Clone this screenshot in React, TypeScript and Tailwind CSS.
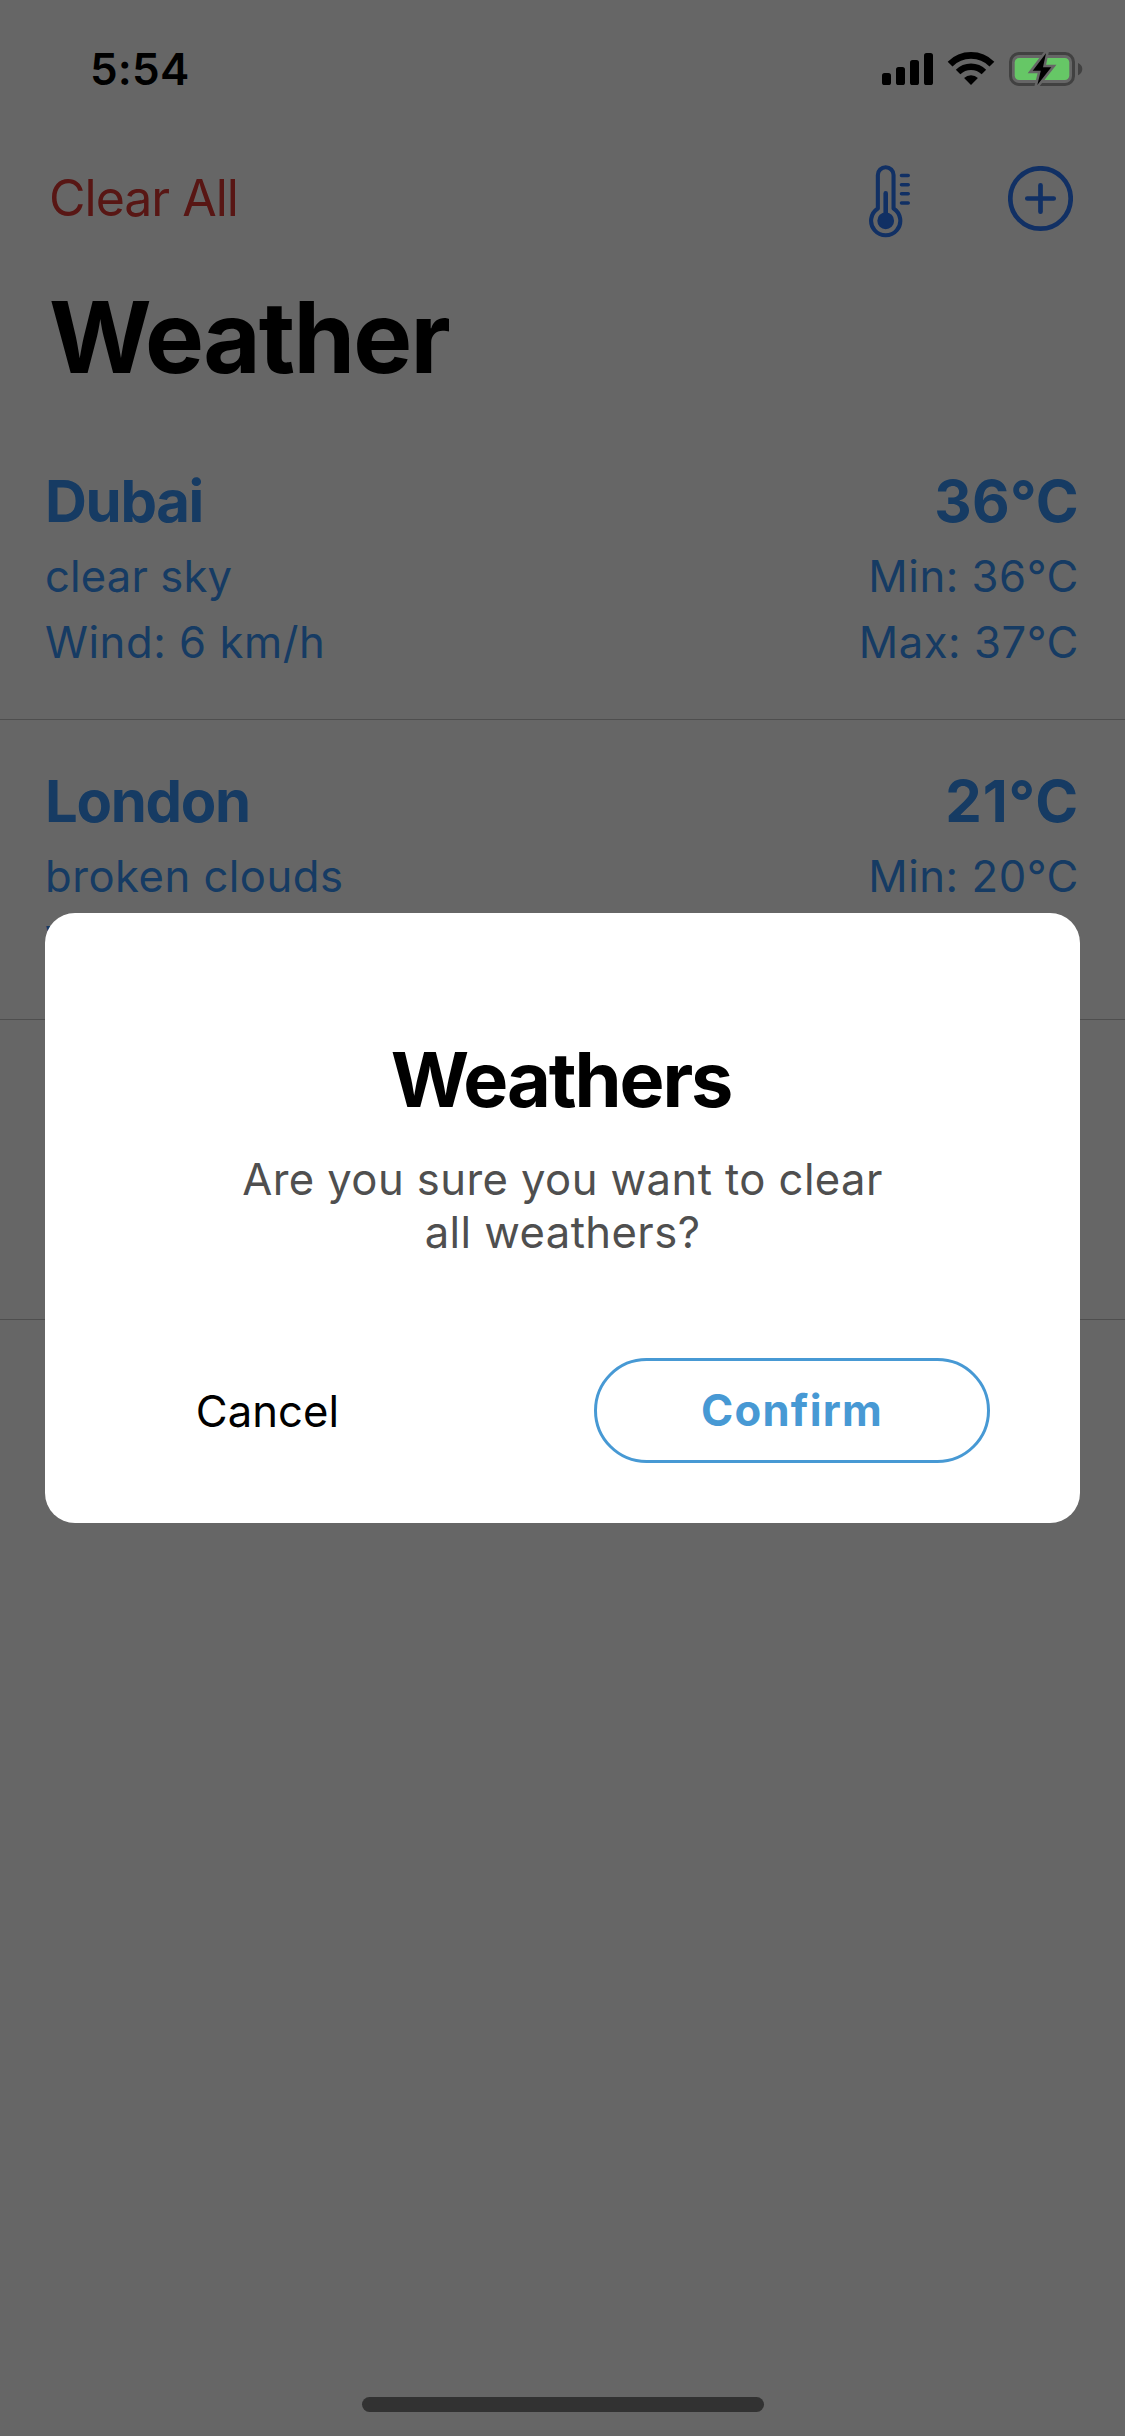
type City = {
  name: string;
  temp: string;
  sky: string;
  wind: string;
  min: string;
  max: string;
  tempTracking: string;
  skyTracking: string;
};

const cities: City[] = [
  {
    name: "Dubai",
    temp: "36°C",
    sky: "clear sky",
    wind: "Wind: 6 km/h",
    min: "Min: 36°C",
    max: "Max: 37°C",
    tempTracking: "tracking-[0.25px]",
    skyTracking: "tracking-[0.15px]",
  },
  {
    name: "London",
    temp: "21°C",
    sky: "broken clouds",
    wind: "Wind: 4 km/h",
    min: "Min: 20°C",
    max: "Max: 22°C",
    tempTracking: "tracking-[0.9px]",
    skyTracking: "tracking-[0.5px]",
  },
];

function StatusIcons() {
  return (
    <svg width="201" height="36" viewBox="22 21 201 36" fill="none">
      <rect x="22" y="43" width="9" height="12" rx="2.6" fill="#000" />
      <rect x="36" y="37" width="9" height="18" rx="2.6" fill="#000" />
      <rect x="50" y="30" width="9" height="25" rx="2.6" fill="#000" />
      <rect x="64" y="23" width="9" height="32" rx="2.6" fill="#000" />

      <path d="M90.1 34.1A29.5 29.5 0 0 1 131.9 34.1" stroke="#000" strokeWidth="6.8" />
      <path d="M98.1 42.1A18.3 18.3 0 0 1 123.9 42.1" stroke="#000" strokeWidth="6.4" />
      <path d="M111 55L104.1 48.1A9.8 9.8 0 0 1 117.9 48.1Z" fill="#000" />

      <rect x="150.5" y="23.5" width="63" height="31" rx="8.5" stroke="#414141" strokeWidth="3" />
      <rect x="154.7" y="28" width="54.6" height="22" rx="4.5" fill="#66c766" />
      <path d="M218 33C220.6 34 222.3 36.4 222.3 39C222.3 41.8 220.6 44.2 218 45.2Z" fill="#414141" />
      <path
        d="M186 23.3L172.7 40.7H180.8L177.3 55L191.3 37.3H183Z"
        stroke="#666"
        strokeWidth="5"
        strokeMiterlimit="6"
      />
      <path d="M186 23.3L172.7 40.7H180.8L177.3 55L191.3 37.3H183Z" fill="#000" />
    </svg>
  );
}

function ThermometerIcon() {
  return (
    <svg className="mt-[6px]" width="41" height="73" viewBox="0 0 41 73" fill="none" stroke="#2b78fa">
      <path d="M8.85 43.4V10.1a7.85 7.85 0 0 1 15.7 0v33.3a14.6 14.6 0 1 1-15.7 0Z" strokeWidth="4.1" strokeLinejoin="round" />
      <path d="M16.7 28.4V55" strokeWidth="4.6" strokeLinecap="round" />
      <circle cx="16.7" cy="55.8" r="8.4" fill="#2b78fa" stroke="none" />
      <path d="M32.5 10.5H39.2M32.5 19.7H39.2M32.5 28.8H39.2M32.5 38H39.2" strokeWidth="3.6" strokeLinecap="round" />
    </svg>
  );
}

function AddIcon() {
  return (
    <svg className="mt-px" width="65" height="66" viewBox="0 0 65 66" fill="none" stroke="#2b78fa" strokeLinecap="round">
      <circle cx="32.5" cy="32.5" r="30.2" strokeWidth="4.7" />
      <path d="M19.3 32.5H45.7M32.5 19.3V45.7" strokeWidth="4.7" />
    </svg>
  );
}

function CityRow({ city }: { city: City }) {
  return (
    <li className="flex h-[300px] justify-between border-b border-[#c3c3c3] pt-[39px] pr-[46px] pl-[45px] text-[43.6px] leading-[66px] tracking-[0.55px] text-[#3794f8]">
      <div>
        <h2 className="mb-px text-[58px] leading-[84px] font-bold tracking-[-1.3px]">{city.name}</h2>
        <p className={city.skyTracking}>{city.sky}</p>
        <p>{city.wind}</p>
      </div>
      <div className="text-right">
        <p className={`mb-px text-[58px] leading-[84px] font-bold ${city.tempTracking}`}>{city.temp}</p>
        <p>{city.min}</p>
        <p>{city.max}</p>
      </div>
    </li>
  );
}

function ConfirmDialog() {
  return (
    <div className="absolute inset-0 flex items-center justify-center bg-black/60">
      <div className="flex h-[610px] w-[1035px] flex-col items-center rounded-[30px] bg-white px-[90px] pt-[121px]">
        <h3 className="mr-[3px] text-[75.6px] leading-[91px] font-bold tracking-[-2.1px] text-black">Weathers</h3>
        <p className="mt-[28px] w-[660px] text-center text-[43.6px] leading-[53px] tracking-[0.42px] text-[#4f4f4f]">
          Are you sure you want to clear all weathers?
        </p>
        <div className="mt-[99px] flex w-full items-center justify-between">
          <button className="h-[105px] w-[265px] pt-[2px] text-[43.6px] tracking-[0.1px] text-black">Cancel</button>
          <button className="h-[105px] w-[396px] rounded-full border-[3px] border-[#4799d4] pt-px text-[43.6px] font-bold tracking-[1.2px] text-[#4799d4]">
            Confirm
          </button>
        </div>
      </div>
    </div>
  );
}

export default function App() {
  return (
    <div className="relative h-[2436px] w-[1125px] overflow-hidden bg-white font-['Inter',sans-serif]">
      <div className="relative z-10 flex h-[138px] items-center justify-between pr-[42px] pl-[90px]">
        <span className="text-[44px] leading-none font-semibold tracking-[0.2px] text-black">5:54</span>
        <StatusIcons />
      </div>

      <header>
        <nav className="flex h-[120px] items-center justify-between pr-[52px] pl-[49px]">
          <button className="text-[50px] leading-[60px] tracking-[-1px] text-[#dc3732]">Clear All</button>
          <div className="flex items-center gap-[98px]">
            <ThermometerIcon />
            <AddIcon />
          </div>
        </nav>
        <h1 className="mt-px mb-[5px] pl-[49px] text-[99px] leading-[156px] font-bold tracking-[-1.8px] text-black">Weather</h1>
      </header>

      <ul>
        {cities.map((city) => (
          <CityRow key={city.name} city={city} />
        ))}
        <li className="h-[300px] border-b border-[#c3c3c3]" />
      </ul>

      <ConfirmDialog />

      <div className="absolute bottom-[24px] left-[362px] h-[15px] w-[402px] rounded-full bg-[#323232]" />
    </div>
  );
}
